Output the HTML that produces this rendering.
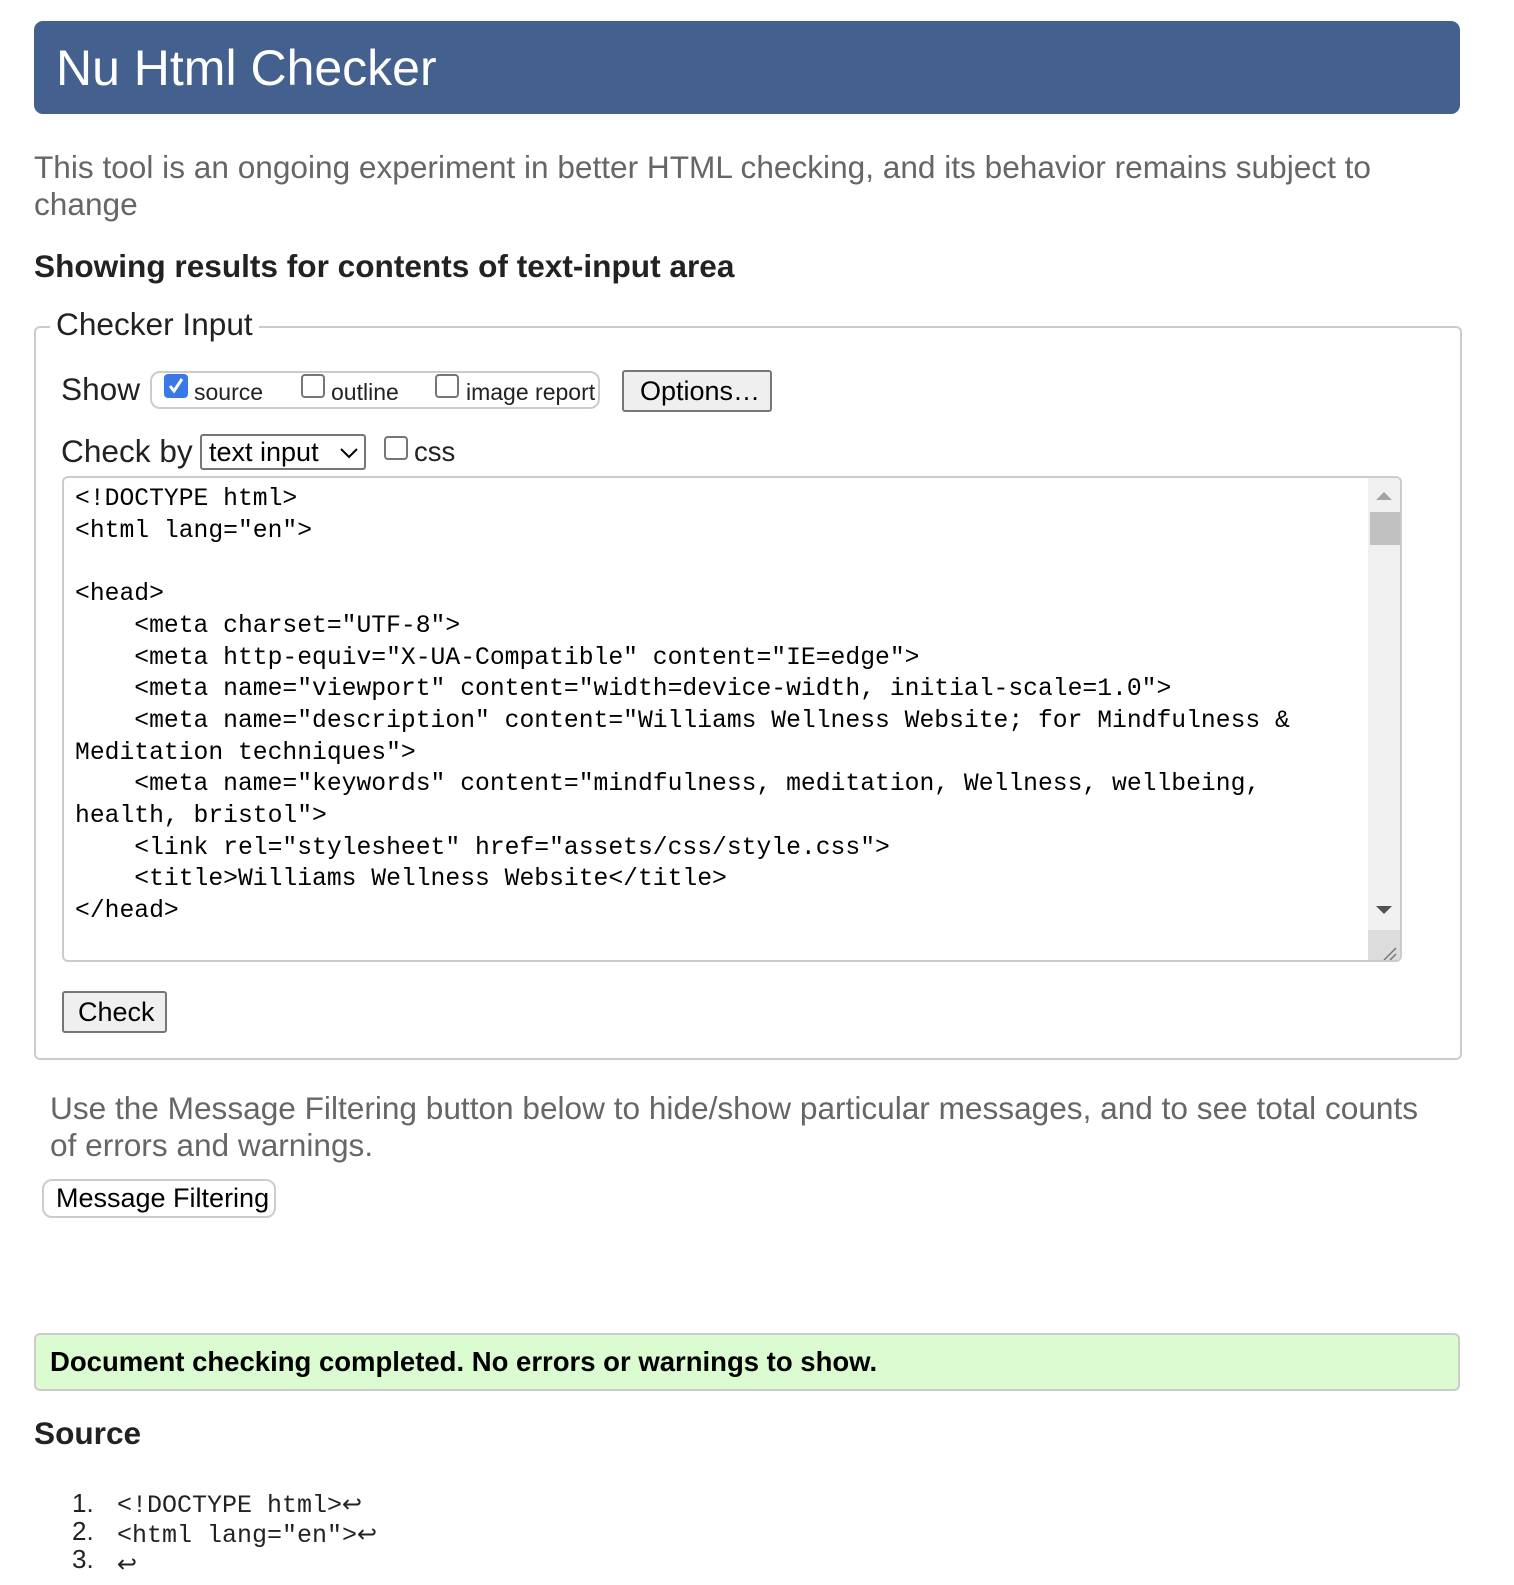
<!DOCTYPE html>
<html><head><style>
body{margin:0;width:1514px;height:1585px;overflow:hidden;background:#fff;font-family:"Liberation Sans",Arial,sans-serif;color:#222;position:relative}
.a{position:absolute;white-space:pre}
.hdr{position:absolute;left:34px;top:21px;width:1426px;height:93px;background:#44608f;border-radius:9px}
.hdr span{position:absolute;left:22px;top:18px;color:#fff;font-size:50px}
.fs{position:absolute;left:34px;top:326px;width:1424px;height:730px;border:2px solid #ccc;border-radius:6px}
.cb{position:absolute;width:24px;height:24px;border:2px solid #767676;border-radius:4px;box-sizing:border-box;background:#fff}
.btn{position:absolute;border:2px solid #767676;border-radius:3px;background:#efefef;box-sizing:border-box;font-size:27px;color:#000}
.ta{position:absolute;left:62px;top:476px;width:1340px;height:486px;border:2px solid #ccc;border-radius:6px;box-sizing:border-box;overflow:hidden;background:#fff}
.code{position:absolute;left:11px;top:6px;font-family:"Liberation Mono",monospace;font-size:24.7px;line-height:31.7px;color:#000;white-space:pre}
.sb{position:absolute;right:0;top:0;width:32px;height:100%;background:#f0f0f0}
.src{font-family:"Liberation Mono",monospace;font-size:25px;line-height:28px;color:#222}
.src b{font-weight:normal;font-family:"DejaVu Sans",sans-serif;font-size:24px}
</style></head><body>
<div class="hdr"><span>Nu Html Checker</span></div>
<div class="a" style="left:34px;top:149px;font-size:31.6px;line-height:37px;color:#666">This tool is an ongoing experiment in better HTML checking, and its behavior remains subject to
change</div>
<div class="a" style="left:34px;top:248px;font-size:31.6px;font-weight:bold;color:#222">Showing results for contents of text-input area</div>
<div class="fs"></div>
<div class="a" style="left:50px;top:306px;background:#fff;padding:0 6px;font-size:31.6px;color:#222">Checker Input</div>
<div class="a" style="left:61px;top:371px;font-size:31.6px">Show</div>
<div style="position:absolute;left:150px;top:371px;width:450px;height:38px;border:2px solid #ccc;border-radius:10px;box-sizing:border-box"></div>
<div class="cb" style="left:164px;top:374px;background:#3b78e7;border-color:#3b78e7"><svg width="20" height="20" viewBox="0 0 20 20" style="position:absolute;left:0;top:0"><path d="M4 10l4 5 8-12" stroke="#fff" stroke-width="3" fill="none"/></svg></div>
<div class="a" style="left:194px;top:379px;font-size:23px;color:#222">source</div>
<div class="cb" style="left:301px;top:374px"></div>
<div class="a" style="left:331px;top:379px;font-size:23px">outline</div>
<div class="cb" style="left:435px;top:374px"></div>
<div class="a" style="left:466px;top:379px;font-size:23px">image report</div>
<div class="btn" style="left:622px;top:370px;width:150px;height:42px;padding:4px 0 0 16px">Options…</div>
<div class="a" style="left:61px;top:433px;font-size:31.6px">Check by</div>
<div style="position:absolute;left:200px;top:434px;width:166px;height:36px;border:2px solid #767676;border-radius:3px;box-sizing:border-box;font-size:27px;color:#000;padding:0 0 0 7px;line-height:32px">text input<svg width="20" height="12" style="position:absolute;left:137px;top:11px"><path d="M2 2l8 8 8-8" stroke="#000" stroke-width="2" fill="none"/></svg></div>
<div class="cb" style="left:384px;top:436px"></div>
<div class="a" style="left:414px;top:436px;font-size:27.5px">css</div>
<div class="ta"><div class="code">&lt;!DOCTYPE html&gt;
&lt;html lang="en"&gt;

&lt;head&gt;
    &lt;meta charset="UTF-8"&gt;
    &lt;meta http-equiv="X-UA-Compatible" content="IE=edge"&gt;
    &lt;meta name="viewport" content="width=device-width, initial-scale=1.0"&gt;
    &lt;meta name="description" content="Williams Wellness Website; for Mindfulness &amp;
Meditation techniques"&gt;
    &lt;meta name="keywords" content="mindfulness, meditation, Wellness, wellbeing,
health, bristol"&gt;
    &lt;link rel="stylesheet" href="assets/css/style.css"&gt;
    &lt;title&gt;Williams Wellness Website&lt;/title&gt;
&lt;/head&gt;</div>
<div class="sb"><svg width="32" height="486" style="position:absolute;left:0;top:0"><path d="M8 22l8-8 8 8z" fill="#a3a3a3"/><rect x="2" y="34" width="30" height="33" fill="#c1c1c1"/><path d="M8 428l8 8 8-8z" fill="#505050"/><rect x="0" y="452" width="32" height="34" fill="#dcdcdc"/><path d="M16 482l12-12M22 482l6-6" stroke="#777" stroke-width="1.5"/></svg></div></div>
<div class="btn" style="left:62px;top:991px;width:105px;height:42px;padding:4px 0 0 14px">Check</div>
<div class="a" style="left:50px;top:1090px;font-size:31.6px;line-height:37px;color:#666">Use the Message Filtering button below to hide/show particular messages, and to see total counts
of errors and warnings.</div>
<div style="position:absolute;left:42px;top:1179px;width:234px;height:39px;border:2px solid #ccc;border-radius:10px;box-sizing:border-box;font-size:27px;color:#000;padding:2px 0 0 12px">Message Filtering</div>
<div style="position:absolute;left:34px;top:1333px;width:1426px;height:58px;background:#dbfbd1;border:2px solid #ccc;border-radius:6px;box-sizing:border-box"></div>
<div class="a" style="left:50px;top:1346px;font-size:27.5px;font-weight:bold;color:#000">Document checking completed. No errors or warnings to show.</div>
<div class="a" style="left:34px;top:1415px;font-size:31.6px;font-weight:bold">Source</div>
<div class="a" style="left:72px;top:1489px;font-size:26px;line-height:28px">1.
2.
3.</div>
<div class="a src" style="left:117px;top:1490px">&lt;!DOCTYPE html&gt;<b>↩</b>
&lt;html lang="en"&gt;<b>↩</b>
<b>↩</b></div>
</body></html>
